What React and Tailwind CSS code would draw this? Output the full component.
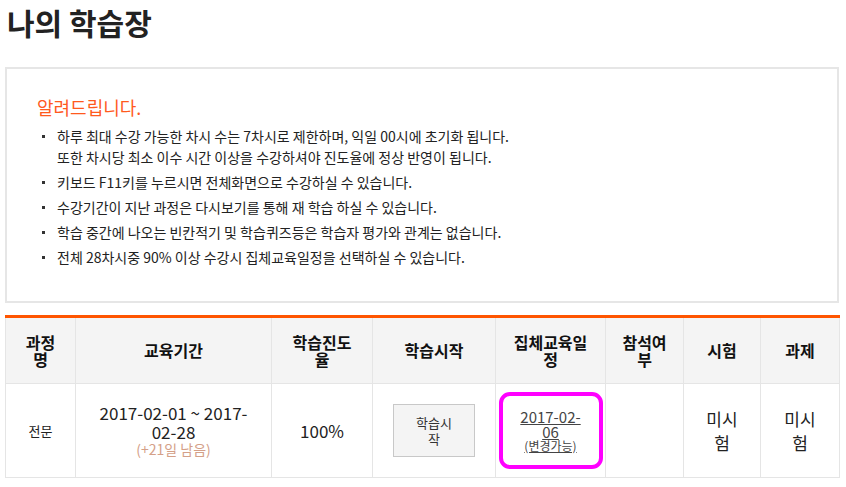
const FONT = { fontFamily: '"Noto Sans CJK KR", "Noto Sans", sans-serif' }

const NOTICES = [
  ['하루 최대 수강 가능한 차시 수는 7차시로 제한하며, 익일 00시에 초기화 됩니다.', '또한 차시당 최소 이수 시간 이상을 수강하셔야 진도율에 정상 반영이 됩니다.'],
  ['키보드 F11키를 누르시면 전체화면으로 수강하실 수 있습니다.'],
  ['수강기간이 지난 과정은 다시보기를 통해 재 학습 하실 수 있습니다.'],
  ['학습 중간에 나오는 빈칸적기 및 학습퀴즈등은 학습자 평가와 관계는 없습니다.'],
  ['전체 28차시중 90% 이상 수강시 집체교육일정을 선택하실 수 있습니다.'],
]

const COLS = [
  { label: '과정명', w: 'w-[70px]' },
  { label: '교육기간', w: 'w-[196px]' },
  { label: '학습진도율', w: 'w-[101px]' },
  { label: '학습시작', w: 'w-[123px]' },
  { label: '집체교육일정', w: 'w-[110px]' },
  { label: '참석여부', w: 'w-[78px]' },
  { label: '시험', w: 'w-[77px]' },
  { label: '과제', w: 'w-[79px]' },
]

export default function App() {
  return (
    <div className="min-h-[487px] bg-white px-[5px] pr-[7px] text-[#222]" style={FONT}>
      <h1 className="pl-[2px] pt-[1px] text-[30px] font-bold leading-[42px] text-[#222]">나의 학습장</h1>

      {/* 안내 박스 */}
      <div className="mt-[24px] h-[236px] border-2 border-[#e6e6e6] pl-[30px] pt-[26px]">
        <h2 className="text-[18px] leading-[24px] text-[#ff5a1e]">알려드립니다.</h2>
        <ul className="mt-[7px] space-y-[4px]">
          {NOTICES.map((lines, i) => (
            <li key={i} className="flex text-[14px] leading-[21px]">
              <span className="flex h-[21px] w-[20px] shrink-0 items-center pl-[5px]">
                <span className="h-[3px] w-[3px] bg-[#333]"></span>
              </span>
              <div>
                {lines.map((l, j) => <p key={j}>{l}</p>)}
              </div>
            </li>
          ))}
        </ul>
      </div>

      {/* 학습 테이블 */}
      <table className="mt-[12px] w-[834px] table-fixed border-collapse border-t-[3px] border-t-[#ff5500]">
        <thead>
          <tr className="h-[67px] bg-[#f4f4f4]">
            {COLS.map(c => (
              <th key={c.label} className={`${c.w} border border-[#e5e5e5] border-t-0 px-[16px] text-center align-middle text-[16px] font-bold leading-[17px] text-[#111]`}>
                {c.label}
              </th>
            ))}
          </tr>
        </thead>
        <tbody>
          <tr className="h-[94px]">
            <td className="border border-[#e5e5e5] px-[10px] text-center text-[13px]">전문</td>
            <td className="border border-[#e5e5e5] px-[20px] text-center">
              <div className="text-[17px] leading-[19px]">2017-02-01 ~ 2017-02-28</div>
              <div className="text-[14px] leading-[17px] text-[#d4a088]">(+21일 남음)</div>
            </td>
            <td className="border border-[#e5e5e5] text-center text-[17px]">100%</td>
            <td className="border border-[#e5e5e5] text-center">
              <button className="mx-auto block h-[53px] w-[82px] border border-[#c8c8c8] bg-[#f4f4f4] px-[18px] text-[13px] leading-[16px] text-[#333]">
                학습시작
              </button>
            </td>
            <td className="border border-[#e5e5e5] p-0 text-center">
              <div className="mx-auto flex h-[77px] w-[104px] flex-col items-center justify-center rounded-[11px] border-4 border-[#ff00ff] px-[14px] text-[#444]">
                <a className="text-[15px] leading-[15px] underline">2017-02-06</a>
                <a className="text-[12px] leading-[14px] underline">(변경가능)</a>
              </div>
            </td>
            <td className="border border-[#e5e5e5]"></td>
            <td className="border border-[#e5e5e5] px-[18px] text-center text-[17px] leading-[24px]">미시험</td>
            <td className="border border-[#e5e5e5] px-[18px] text-center text-[17px] leading-[24px]">미시험</td>
          </tr>
        </tbody>
      </table>
    </div>
  )
}
